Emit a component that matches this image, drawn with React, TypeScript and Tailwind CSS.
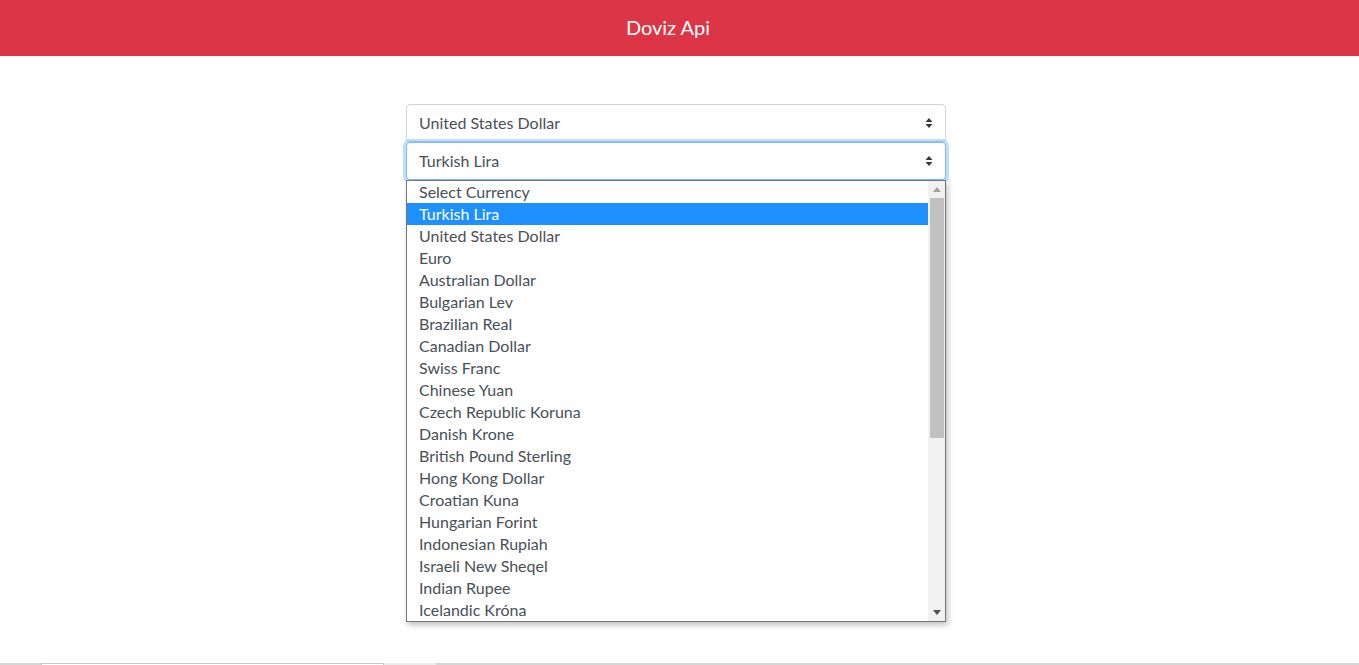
const currencies = [
  "Select Currency",
  "Turkish Lira",
  "United States Dollar",
  "Euro",
  "Australian Dollar",
  "Bulgarian Lev",
  "Brazilian Real",
  "Canadian Dollar",
  "Swiss Franc",
  "Chinese Yuan",
  "Czech Republic Koruna",
  "Danish Krone",
  "British Pound Sterling",
  "Hong Kong Dollar",
  "Croatian Kuna",
  "Hungarian Forint",
  "Indonesian Rupiah",
  "Israeli New Sheqel",
  "Indian Rupee",
  "Icelandic Króna",
];

function Carets() {
  return (
    <svg width="8" height="12" viewBox="0 0 8 12" className="shrink-0">
      <path d="M4 1 L7.5 5 H0.5 Z" fill="#343a40" />
      <path d="M4 11 L7.5 7 H0.5 Z" fill="#343a40" />
    </svg>
  );
}

function SelectBox({ label, focused }: { label: string; focused?: boolean }) {
  return (
    <div
      className={
        "flex items-center justify-between h-[38px] px-3 rounded bg-white border " +
        (focused
          ? "border-[#80bdff] shadow-[0_0_0_3px_rgba(0,123,255,0.25)]"
          : "border-[#ced4da]")
      }
    >
      <span className="text-[16px] text-[#495057]">{label}</span>
      <Carets />
    </div>
  );
}

export default function App() {
  return (
    <div className="h-[665px] flex flex-col bg-white font-['Lato','Liberation_Sans',sans-serif]">
      <header className="h-14 bg-[#dc3545] flex items-center justify-center pr-[23px]">
        <h1 className="text-white text-[20px] pb-[2px]">Doviz Api</h1>
      </header>

      <main className="flex-1 flex justify-center pt-12 pr-[7px]">
        <div className="w-[540px]">
          <SelectBox label="United States Dollar" />
          <div className="relative">
            <SelectBox label="Turkish Lira" focused />
            {/* open dropdown list */}
            <div className="absolute left-0 top-full w-[540px] h-[442px] bg-white border border-[#767676] shadow-[2px_3px_6px_rgba(0,0,0,0.25)] flex z-10">
              <ul className="flex-1">
                {currencies.map((c, i) => (
                  <li
                    key={c}
                    className={
                      "h-[22px] leading-[22px] pl-3 text-[16px] " +
                      (i === 1 ? "bg-[#1e90ff] text-white" : "text-[#495057]")
                    }
                  >
                    {c}
                  </li>
                ))}
              </ul>
              <div className="w-[17px] bg-[#f1f1f1] flex flex-col items-center">
                <div className="h-[17px] flex items-center justify-center">
                  <svg width="8" height="5" viewBox="0 0 8 5">
                    <path d="M4 0 L8 5 H0 Z" fill="#a3a3a3" />
                  </svg>
                </div>
                <div className="w-[14px] h-[240px] bg-[#c1c1c1]" />
                <div className="flex-1" />
                <div className="h-[17px] flex items-center justify-center">
                  <svg width="8" height="5" viewBox="0 0 8 5">
                    <path d="M0 0 H8 L4 5 Z" fill="#505050" />
                  </svg>
                </div>
              </div>
            </div>
          </div>
        </div>
      </main>

      <div className="h-[2px] flex">
        <div className="w-[41px] bg-[#d6d6d6]" />
        <div className="w-[343px] bg-white border-t border-x border-[#c8c8c8]" />
        <div className="w-[52px] bg-[#ececec]" />
        <div className="flex-1 bg-[#d6d6d6]" />
      </div>
    </div>
  );
}
